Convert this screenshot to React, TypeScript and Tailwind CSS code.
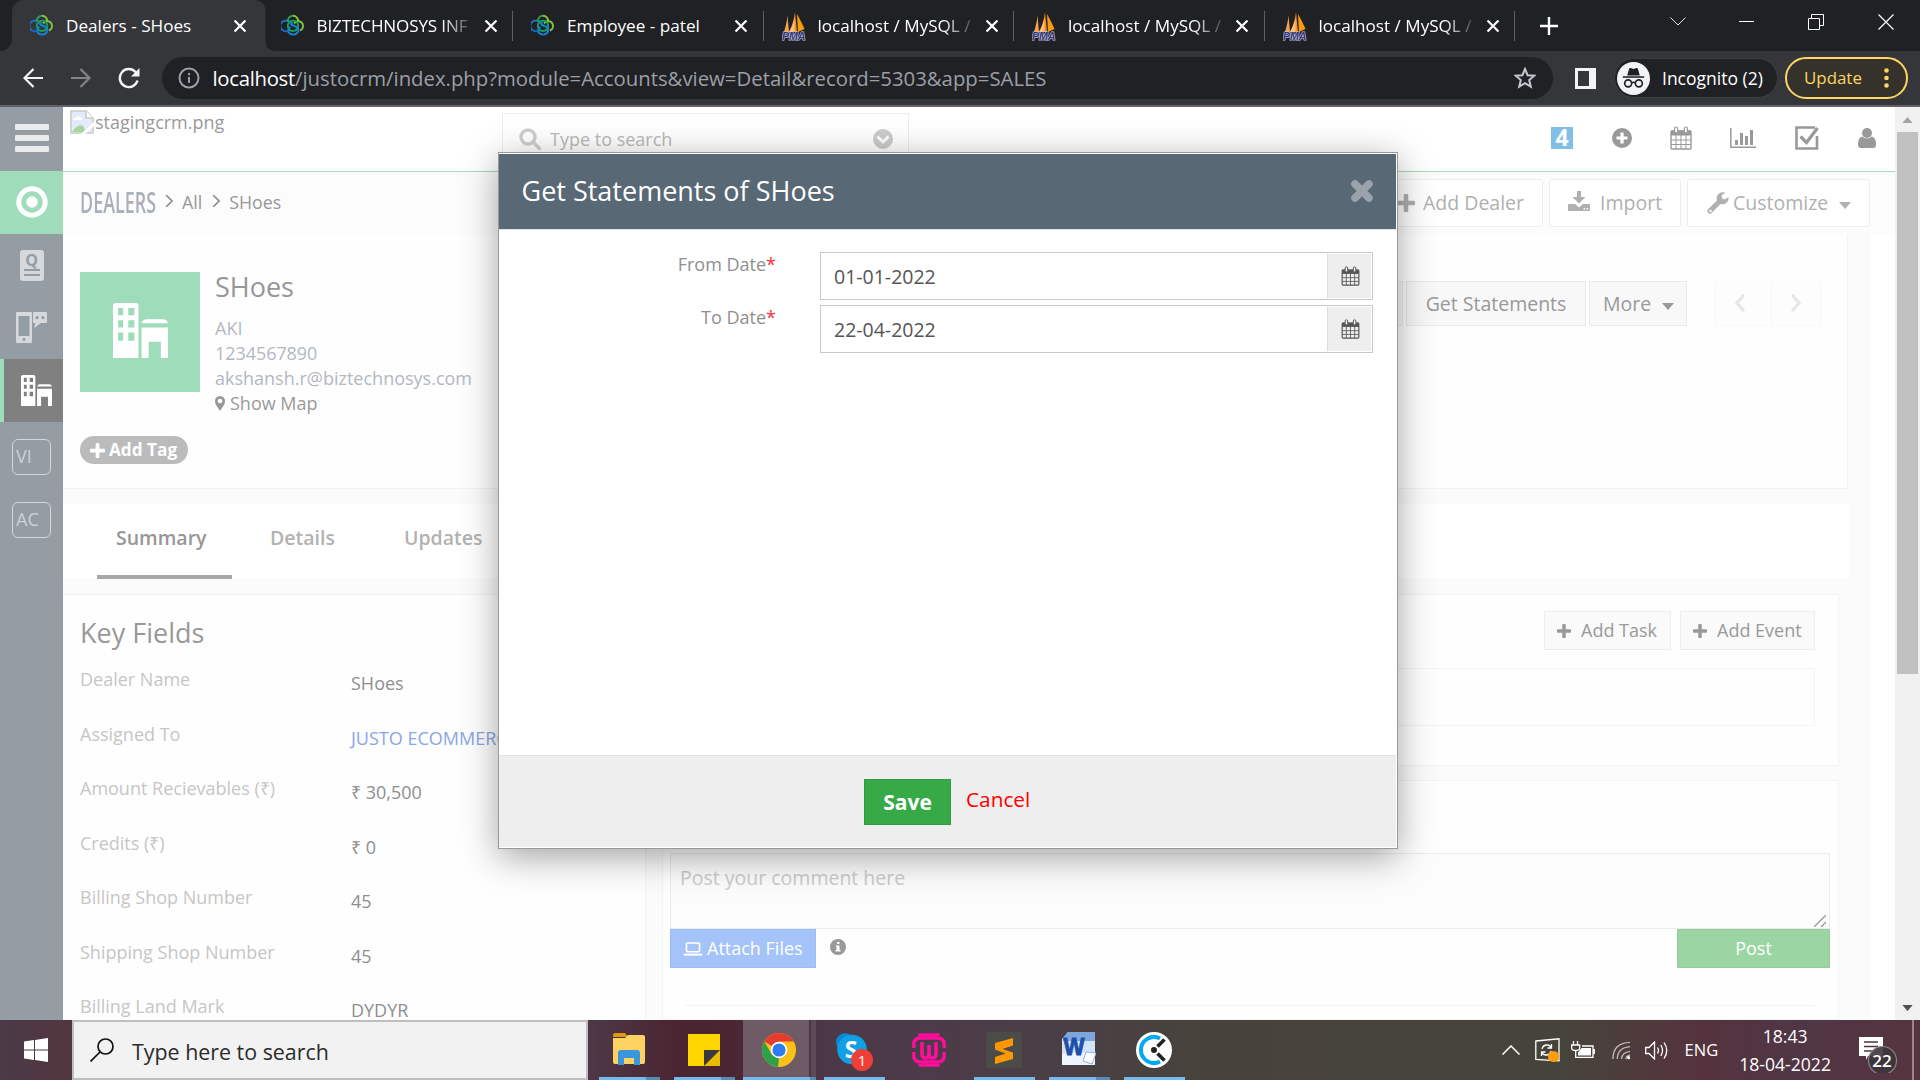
import React from "react";

/* ---------- small shared icons ---------- */

const Calendar = ({ className = "" }: { className?: string }) => (
  <svg viewBox="0 0 22 24" className={className} fill="none" stroke="currentColor">
    <rect x="1" y="5" width="20" height="18" rx="1" strokeWidth="1.4" />
    <path d="M1 4.5h20v5H1z" fill="currentColor" stroke="none" />
    <path d="M6 9v14M11 9v14M16 9v14M1 14h20M1 18.5h20" strokeWidth="1" />
    <rect x="4.6" y="1" width="3" height="6" rx="1.4" fill="#fff" strokeWidth="1.2" />
    <rect x="14.4" y="1" width="3" height="6" rx="1.4" fill="#fff" strokeWidth="1.2" />
  </svg>
);

const Plus = ({ className = "" }: { className?: string }) => (
  <svg viewBox="0 0 16 16" className={className} fill="currentColor">
    <path d="M6 1a1 1 0 0 1 1-1h2a1 1 0 0 1 1 1v5h5a1 1 0 0 1 1 1v2a1 1 0 0 1-1 1h-5v5a1 1 0 0 1-1 1H7a1 1 0 0 1-1-1v-5H1a1 1 0 0 1-1-1V7a1 1 0 0 1 1-1h5z" />
  </svg>
);

const Caret = ({ className = "" }: { className?: string }) => (
  <svg viewBox="0 0 12 7" className={className} fill="currentColor">
    <path d="M0 0h12L6 7z" />
  </svg>
);

const Building = ({ className = "", hole }: { className?: string; hole: string }) => (
  <svg viewBox="0 0 54 54" className={className} fill="#fff">
    <path d="M0 3a3 3 0 0 1 3-3h19a3 3 0 0 1 3 3v51H0z" />
    <path d="M5 5h5v7H5zM15 5h6v7h-6zM5 17h5v7H5zM15 17h6v7h-6zM5 29h5v8H5zM15 29h6v8h-6z" fill={hole} />
    <path d="M28 20q1-4 5-4h16q4 0 5 4zM28 24h26v30h-7V38H35v16h-7z" />
  </svg>
);

const Times = ({ className = "" }: { className?: string }) => (
  <svg viewBox="0 0 24 24" className={className} stroke="currentColor" strokeWidth="7.5" strokeLinecap="round">
    <path d="M5 5l14 14M19 5L5 19" />
  </svg>
);

const CrmLogo = () => (
  <svg viewBox="0 0 24 24" className="size-6 shrink-0" fill="none" strokeWidth="1.9">
    <path d="M2.200 16.500A4.900 4.900 0 0 1 7 7.200q3-.3 4.600 2.300" stroke="#1e74c8" />
    <path d="M6.800 7.300A5.300 5.300 0 0 1 12 1.700" stroke="#2f9e57" />
    <path d="M12 1.700a5.300 5.300 0 0 1 5.200 5.500" stroke="#8cc63f" />
    <path d="M13 9.300q2-2.400 4.800-2a4.800 4.800 0 0 1 1.200 9.200" stroke="#84c341" />
    <circle cx="12" cy="11.800" r="5.200" stroke="#15a35a" />
    <path d="M7 16.300a5.300 5.300 0 0 0 10.400 0q0-3.500-4-4.300-3-.8-4-3" stroke="#1583d8" />
    <path d="M2.200 16.200q2 1.700 5.300 1" stroke="#1769c4" />
    <path d="M7 16.500q.3-2.500 2.500-3.800" stroke="#1583d8" />
  </svg>
);

const PmaLogo = () => (
  <svg viewBox="0 0 24 30" className="h-[30px] w-6 shrink-0">
    <path d="M2 21Q5 11 5.500 4.500L7 21z" fill="#f7a24b" />
    <path d="M7 21Q12 11 13 1l2 20z" fill="#f58f1e" />
    <path d="M15 3q5 9 7.500 15L16 21z" fill="#f89c0e" />
    <path d="M7 21Q11 15 12.500 7v14z" fill="#fbbf7d" />
    <text x="0" y="29" fontSize="10.500" fontWeight="700" fontStyle="italic" fontFamily="Liberation Sans, sans-serif" textLength="23.500" lengthAdjust="spacingAndGlyphs" fill="#34387a" stroke="#c7c9e0" strokeWidth="1.200" paintOrder="stroke">PMA</text>
  </svg>
);

/* ---------- browser chrome ---------- */

const tabs = [
  { title: "Dealers - SHoes", logo: "crm" },
  { title: "BIZTECHNOSYS INF", logo: "crm" },
  { title: "Employee - patel", logo: "crm" },
  { title: "localhost / MySQL /", logo: "pma" },
  { title: "localhost / MySQL /", logo: "pma" },
  { title: "localhost / MySQL /", logo: "pma" },
];

const TabStrip = () => (
  <div className="flex h-[51px] bg-[#202124] text-white">
    <div className="flex w-3 items-end bg-[#35363a]">
      <div className="h-full w-full rounded-br-xl bg-[#202124]" />
    </div>
    {tabs.map((t, i) => (
      <div
        key={i}
        className={
          i === 0
            ? "flex h-full w-[250.500px] shrink-0 items-center rounded-tl-xl bg-[#35363a] pl-[18px]"
            : i === 1
              ? "flex h-full w-[250.500px] shrink-0 items-center"
              : "flex h-full w-[250.500px] shrink-0 items-center pl-[18px]"
        }
      >
        {i === 1 && (
          <svg viewBox="0 0 32 51" className="-ml-[14px] h-[51px] w-8 shrink-0">
            <rect width="32" height="51" fill="#202124" />
            <path d="M0 0h4q12.500 0 12.500 12v28q0 11 10.500 11H0z" fill="#35363a" />
          </svg>
        )}
        {t.logo === "crm" ? <CrmLogo /> : <PmaLogo />}
        <div className={i === 0 || i === 2
          ? "ml-3 w-[156px] shrink-0 text-[17.150px] leading-6 whitespace-nowrap"
          : "ml-3 w-[156px] shrink-0 mask-[linear-gradient(90deg,#000_125px,transparent_160px)] text-[17.100px] leading-6 whitespace-nowrap"}>
          <span className={i === 1 ? "tracking-[-0.150px]" : ""}>{t.title}</span>
        </div>
        <svg viewBox="0 0 12 12" className="ml-3 size-3 shrink-0" stroke="#fff" strokeWidth="2.200">
          <path d="M.5.5l11 11M11.500.5l-11 11" />
        </svg>
        {i > 0 && <div className="ml-auto h-[30px] w-px bg-[#5f6064]" />}
      </div>
    ))}
    <svg viewBox="0 0 18 18" className="mt-[17px] ml-[25px] size-[18px]" stroke="#fff" strokeWidth="2.400">
      <path d="M9 0v18M0 9h18" />
    </svg>
    <div className="ml-auto flex h-[43px] items-center text-[#e3e3e3]">
      <svg viewBox="0 0 16 9" className="mr-[53px] h-[9px] w-4" fill="none" stroke="currentColor"><path d="M.5.5L8 8l7.500-7.500" /></svg>
      <div className="mr-[54px] h-px w-[15px] bg-white" />
      <svg viewBox="0 0 16 16" className="mr-[54px] size-4" fill="none" stroke="#fff"><path d="M.5 4.500h11v11H.5zM3.500 4.500v-4h12v11h-4" /></svg>
      <svg viewBox="0 0 16 16" className="mr-[26px] size-4" stroke="#fff" strokeWidth="1.200"><path d="M.5.5l15 15M15.500.5l-15 15" /></svg>
    </div>
  </div>
);

const Toolbar = () => (
  <div className="flex h-14 items-center border-b-2 border-[#5f6368] bg-[#35363a] pr-3">
    <svg viewBox="0 0 20 20" className="ml-[22.500px] size-5" fill="none" stroke="#f1f3f4" strokeWidth="2.200"><path d="M20 10H2M10.500 1L1.500 10l9 9" /></svg>
    <svg viewBox="0 0 20 20" className="ml-7 size-5" fill="none" stroke="#828387" strokeWidth="2.200"><path d="M0 10h18M9.500 1l9 9-9 9" /></svg>
    <svg viewBox="0 0 22 22" className="ml-[27.500px] size-[22px]" fill="none" stroke="#f1f3f4" strokeWidth="2.400">
      <path d="M19.500 13.500A9 9 0 1 1 17.500 5L20 7.500" />
      <path d="M21.500 1v8.500H13z" fill="#f1f3f4" stroke="none" />
    </svg>
    <div className="ml-[22px] flex h-[42px] w-[1391px] items-center rounded-full bg-[#202124] pl-[16px]">
      <svg viewBox="0 0 22 22" className="size-[22px]" fill="none" stroke="#9aa0a6" strokeWidth="2">
        <circle cx="11" cy="11" r="9.500" /><path d="M11 10v6M11 6v2.200" />
      </svg>
      <div className="ml-[12.500px] text-[20.330px] leading-7 whitespace-nowrap text-[#9aa0a6]">
        <span className="tracking-[-0.300px] text-white">localhost</span>/justocrm/index.php?module=Accounts&amp;view=Detail&amp;record=5303&amp;app=SALES
      </div>
      <svg viewBox="0 0 22 22" className="mr-[17px] ml-auto size-[22px]" fill="none" stroke="#c4c7cc" strokeWidth="2"><path d="M11 2l2.600 6.200 6.700.5-5.100 4.400 1.600 6.600L11 16.200l-5.800 3.500 1.600-6.600L1.700 8.700l6.700-.5z" /></svg>
    </div>
    <div className="ml-[22px] flex size-[21px] bg-[#f1f3f4] p-[3px]"><div className="h-full w-[11px] bg-[#35363a]" /></div>
    <div className="ml-[18px] flex h-10 w-[164px] items-center rounded-full border border-[#3c3d41] bg-[#202124] pl-[2px]">
      <svg viewBox="0 0 34 34" className="size-[33px]">
        <circle cx="17" cy="17" r="17" fill="#f1f3f4" />
        <path d="M10.500 14l2-7q.4-1 1.500-.7l3 .8 3-.8q1.100-.3 1.500.7l2 7z" fill="#202124" />
        <path d="M6 15.500h22" stroke="#202124" strokeWidth="1.600" />
        <g fill="none" stroke="#202124" strokeWidth="1.700"><circle cx="11.500" cy="22" r="3.600" /><circle cx="22.500" cy="22" r="3.600" /><path d="M15 21.500q2-1.200 4 0" /></g>
      </svg>
      <span className="ml-3 text-[17.500px] leading-6 whitespace-nowrap text-white">Incognito (2)</span>
    </div>
    <div className="ml-[7px] flex h-[42px] w-[123px] items-center rounded-full border-2 border-[#fdd663] bg-[#35322b] pl-[17px] text-[#fdd663]">
      <span className="text-[16.900px] leading-6">Update</span>
      <svg viewBox="0 0 5 20" className="ml-[22px] h-5 w-[5px]" fill="currentColor"><circle cx="2.500" cy="2.500" r="2.300" /><circle cx="2.500" cy="10" r="2.300" /><circle cx="2.500" cy="17.500" r="2.300" /></svg>
    </div>
  </div>
);

/* ---------- CRM page ---------- */

const Sidebar = () => (
  <div className="flex w-[63px] shrink-0 flex-col bg-[#949ca4]">
    <div className="flex h-16 flex-col items-center justify-center gap-[5px] pb-[2px]">
      <div className="h-1.5 w-[34px] rounded-[1px] bg-[#e9ebed]" />
      <div className="h-1.5 w-[34px] rounded-[1px] bg-[#e9ebed]" />
      <div className="h-1.5 w-[34px] rounded-[1px] bg-[#e9ebed]" />
    </div>
    <div className="flex h-[63px] items-center justify-center bg-[#9edcba] pb-[2px]">
      <svg viewBox="0 0 32 32" className="size-8"><circle cx="16" cy="16" r="13.200" fill="none" stroke="#fff" strokeWidth="5" /><circle cx="16" cy="16" r="5.700" fill="#fff" /></svg>
    </div>
    <div className="flex h-[63px] items-center justify-center pb-px">
      <div className="flex h-[31px] w-6 flex-col items-center rounded-[3px] bg-[#d6d9dc] text-[#949ca4]">
        <span className="h-[18px] text-[16px] leading-5 font-bold">Q</span>
        <div className="mt-px h-[2px] w-4 bg-[#949ca4]" />
        <div className="mt-[3px] h-[2px] w-4 bg-[#949ca4]" />
      </div>
    </div>
    <div className="flex h-[62px] items-center justify-center pb-px">
      <svg viewBox="0 0 31 31" className="size-[31px]" fill="#d6d9dc">
        <path fillRule="evenodd" d="M1 0h14q1 0 1 1v29q0 1-1 1H1q-1 0-1-1V1q0-1 1-1zm1.500 4v20h11V4zM8 26a1.500 1.500 0 1 0 .01 0z" />
        <path fillRule="evenodd" d="M18 0h12q1 0 1 1v9q0 1-1 1h-5l-7 5 1.500-5H17V1q0-1 1-1zm3 4a1.600 1.600 0 1 0 .01 0zm6 0a1.600 1.600 0 1 0 .01 0z" />
      </svg>
    </div>
    <div className="flex h-[63px] items-center border-l-4 border-[#9edcba] bg-[#808080] pl-[17px]">
      <Building className="size-[31px]" hole="#808080" />
    </div>
    {["VI", "AC"].map((m) => (
      <div key={m} className="flex h-[63px] items-center justify-center pt-[6px]">
        <div className="flex h-9 w-[39px] items-center rounded-md border border-[#d2d6d9] pl-[3px] text-[18px] text-[#cdd1d5]">{m}</div>
      </div>
    ))}
  </div>
);

const Header = () => (
  <div className="flex h-[65px] border-b border-[#9edcba] bg-white text-[#999]">
    <div className="flex w-[439px] pt-[3px] pl-[7px]">
      <svg viewBox="0 0 24 24" className="size-6">
        <path d="M1 1h15l7 7v15H1z" fill="#e3ebfa" stroke="#ccc" strokeWidth="1.600" />
        <path d="M16 1v7h7" fill="#fff" stroke="#ccc" strokeWidth="1.600" />
        <path d="M3 9q1-2 3-1 1-3 4-1 3 0 2 3H3z" fill="#fff" />
        <path d="M2 22q6-9 11-6l3 6z" fill="#a8d79b" />
        <path d="M11 24L24 12v4l-9 8z" fill="#fff" />
      </svg>
      <span className="ml-px text-[18px] leading-[25px]">stagingcrm.png</span>
    </div>
    <div className="mt-[6px] flex h-[58px] w-[407px] border border-b-0 border-[#ececec] pt-[13px] pl-4 text-[#b9b9b9]">
      <svg viewBox="0 0 22 22" className="mt-[1px] size-[22px]" fill="none" stroke="#cfcfcf" strokeWidth="3.400"><circle cx="9" cy="9" r="7" /><path d="M14 14l6.500 6.500" strokeLinecap="round" /></svg>
      <span className="ml-[9px] text-[18px] leading-6">Type to search</span>
      <svg viewBox="0 0 20 20" className="mt-[2px] mr-[15px] ml-auto size-5"><circle cx="10" cy="10" r="10" fill="#cbcbcb" /><path d="M4.500 7.500L10 13l5.500-5.500" fill="none" stroke="#fff" strokeWidth="3" /></svg>
    </div>
    <div className="mr-[19px] ml-auto flex h-[61px] items-center">
      <div className="mr-[39px] flex size-[22px] items-center justify-center bg-[#80c0e6] text-[23px] leading-none font-bold text-white">4</div>
      <svg viewBox="0 0 20 20" className="mr-[38px] size-5"><circle cx="10" cy="10" r="10" fill="#999" /><path d="M10 4.500v11M4.500 10h11" stroke="#fff" strokeWidth="3.200" /></svg>
      <Calendar className="mr-[38px] h-6 w-[22px]" />
      <svg viewBox="0 0 26 20" className="mr-[39px] h-5 w-[26px]" fill="none" stroke="#999"><path d="M.8 0v19.200H26" strokeWidth="1.500" /><path d="M6.500 12v5M11.500 5v12M16.500 8v9M21.500 2v15" strokeWidth="3" /></svg>
      <svg viewBox="0 0 24 24" className="mr-[39px] size-6" fill="none" stroke="#999"><path d="M20 1.500H1.500v21H22V10" strokeWidth="2.600" /><path d="M5.500 10.500l6 6L22.500 2" strokeWidth="3.200" /></svg>
      <svg viewBox="0 0 18 20" className="h-5 w-[18px]" fill="#999"><circle cx="9" cy="5" r="5" /><path d="M4 8.500q5 4 10 0 4 1.500 4 8 0 3.500-3 3.500H3q-3 0-3-3.500 0-6.500 4-8z" /></svg>
    </div>
  </div>
);

const Chevron = () => (
  <svg viewBox="0 0 8 12" className="h-3 w-2" fill="none" stroke="#909090" strokeWidth="1.700"><path d="M1 0l6 6-6 6" /></svg>
);

const Breadcrumb = () => (
  <div className="flex h-[62px] items-start bg-[#fcfcfc] pt-[7px] pl-[17px] text-[#b0b0b0]">
    <div className="flex h-[46px] items-center text-[17.800px] text-[#989898]">
      <div className="w-[76px]"><span className="inline-block origin-left scale-x-[0.640] text-[28px] leading-[46px] font-semibold text-[#a9b0b9]">DEALERS</span></div>
      <div className="ml-[9px] pb-[3px]"><Chevron /></div>
      <span className="ml-[9px]">All</span>
      <div className="ml-[10px] pb-[3px]"><Chevron /></div>
      <span className="ml-[9px]">SHoes</span>
    </div>
    <div className="mr-[25px] ml-auto flex gap-[6px] text-[19.500px]">
      <div className="flex h-12 w-[164px] items-center rounded-[3px] border border-[#ededed] bg-white pl-[17px]"><Plus className="size-[18px]" /><span className="ml-2">Add Dealer</span></div>
      <div className="flex h-12 w-[132px] items-center rounded-[3px] border border-[#ededed] bg-white pl-[18px]">
        <svg viewBox="0 0 22 20" className="mb-1 h-5 w-[22px]" fill="currentColor"><path d="M9 0h4v6h4.500L11 12.500 4.500 6H9z" /><path fillRule="evenodd" d="M1 13h6l4 3.500L15 13h6q1 0 1 1v5q0 1-1 1H1q-1 0-1-1v-5q0-1 1-1zm14.500 4v1.500H17V17zm3 0v1.500H20V17z" /></svg>
        <span className="ml-[10px]">Import</span>
      </div>
      <div className="flex h-12 w-[183px] items-center rounded-[3px] border border-[#ededed] bg-white pl-[19px]">
        <svg viewBox="0 0 22 22" className="size-[22px]" fill="currentColor"><path fillRule="evenodd" d="M21.300 5.200L17.500 7.500 14.800 6V3L18.500.7Q14 -1 11 2.500 9 5.200 10 8.500L.8 17.500q-1.200 1.500 0 2.800l1 1q1.200 1 2.500 0L13.500 12q3.500 1 6-1.200Q22.200 8.300 21.300 5.200zM3.500 17.700a1.200 1.200 0 1 1-.01 0z" /></svg>
        <span className="ml-[4px]">Customize</span>
        <Caret className="mt-1 ml-[11px] h-[7px] w-3" />
      </div>
    </div>
  </div>
);

const DealerPanel = () => (
  <div className="flex h-[255px] w-[1785px] border-r border-b border-[#f3f3f3] bg-[#fefefe] pl-[17px]">
    <div className="pt-[38px]">
      <div className="flex">
        <div className="flex size-[120px] items-center justify-center bg-[#9edcba] pb-1"><Building className="ml-px size-[55px]" hole="#9edcba" /></div>
        <div className="ml-[15px] text-[18px] leading-[25px] text-[#b3b8be]">
          <div className="-mt-[1px] h-[45px] text-[27px] leading-[32px] text-[#979797]">SHoes</div>
          <div>AKI</div>
          <div className="text-[17.900px]">1234567890</div>
          <div>akshansh.r@biztechnosys.com</div>
          <div className="flex items-center text-[#999]">
            <svg viewBox="0 0 10 15" className="mr-[5px] h-[15px] w-[10px]" fill="#999"><path fillRule="evenodd" d="M5 0q5 .3 5 5 0 2-1 4l-4 6-4-6Q0 7 0 5 0 .3 5 0zm0 2.700a2.300 2.300 0 1 0 .01 0z" /></svg>
            Show Map
          </div>
        </div>
      </div>
      <div className="mt-[20px] flex h-7 w-[108px] items-center rounded-full bg-[#bbb] pl-[10px] text-[17.200px] font-bold text-white"><Plus className="mr-1 size-[15px]" /><span className="pb-px">Add Tag</span></div>
    </div>
    <div className="mt-[47px] mr-[25px] ml-auto flex text-[19.500px] text-[#999]">
      <div className="mr-[3px] h-[45px] w-[80px] border border-[#eaeaea] bg-[#f8f8f8]" />
      <div className="mr-[3px] flex h-[45px] w-[180px] items-center justify-center border border-[#eaeaea] bg-[#f8f8f8]">Get Statements</div>
      <div className="mr-[27px] flex h-[45px] w-[98px] items-center border border-[#eaeaea] bg-[#f8f8f8] pl-[13px]">More<Caret className="mt-[5px] ml-[11px] h-[7px] w-3" /></div>
      {["M9 1L2 9l7 8", "M2 1l7 8-7 8"].map((d, i) => (
        <div key={i} className={i ? "flex h-[45px] w-[52px] items-center justify-center border border-[#f9f9f9] bg-[#fdfdfd] pr-px pb-[2px]" : "mr-[3px] flex h-[45px] w-[53px] items-center justify-center border border-[#f9f9f9] bg-[#fdfdfd] pb-[2px]"}>
          <svg viewBox="0 0 12 18" className="h-[18px] w-3" fill="none" stroke="#e6e6e6" strokeWidth="3.200"><path d={d} /></svg>
        </div>
      ))}
    </div>
  </div>
);

const TabsPanel = () => (
  <div className="flex h-[75px] w-[1786px] bg-white pl-[34px] text-[19.500px] font-semibold text-[#b2b2b2]">
    <div className="h-full w-[135px] border-b-4 border-[#a8a8a8] pt-[21px] pl-[19px] leading-[26px] text-[#969696]">Summary</div>
    <div className="ml-[38px] w-[134px] pt-[21px] leading-[26px]">Details</div>
    <div className="pt-[21px] leading-[26px]">Updates</div>
  </div>
);

const fields = [
  ["Dealer Name", "SHoes"],
  ["Assigned To", "JUSTO ECOMMERCE"],
  ["Amount Recievables (₹)", "₹ 30,500"],
  ["Credits (₹)", "₹ 0"],
  ["Billing Shop Number", "45"],
  ["Shipping Shop Number", "45"],
  ["Billing Land Mark", "DYDYR"],
];

const KeyFields = () => (
  <div className="w-[583px] shrink-0 border-t border-r border-[#f1f1f1] bg-[#fefefe] pl-[17px]">
    <div className="mt-[20px] h-[51px] text-[27px] leading-9 text-[#999]">Key Fields</div>
    {fields.map(([label, value], i) => (
      <div key={label} className="flex h-[54.500px] text-[18px] leading-[26px]">
        <span className="w-[271px] text-[#c6c6c6]">{label}</span>
        <span className={i === 1 ? "pt-1 whitespace-nowrap text-[#8aa6e6]" : "pt-1 text-[#8e8e8e]"}>{value}</span>
      </div>
    ))}
  </div>
);

const Activities = () => (
  <div className="h-[172px] border border-[#f3f3f3] bg-[#fefefe] pt-4 pr-[23px] text-[18px] text-[#999]">
    <div className="flex justify-end gap-[9px]">
      <div className="flex h-[39px] w-[127px] items-center border border-[#eee] bg-[#fafafa] pl-3"><Plus className="mr-[10px] size-[14px]" />Add Task</div>
      <div className="flex h-[39px] w-[135px] items-center border border-[#eee] bg-[#fafafa] pl-3"><Plus className="mr-[10px] size-[14px]" />Add Event</div>
    </div>
    <div className="mt-[18px] ml-[22px] h-[58px] border border-[#f3f3f3]" />
  </div>
);

const Comments = () => (
  <div className="mt-[14px] flex-1 border border-[#f3f3f3] bg-[#fefefe] pt-[72px] pr-[8px] pl-[7px]">
    <div className="flex h-[76px] items-start border border-[#ebebeb] bg-[#fcfcfc] pt-[10px] pl-[9px] text-[19.500px] leading-[28px] text-[#cbcbcb]">
      Post your comment here
      <svg viewBox="0 0 12 12" className="mt-[51px] mr-[3px] ml-auto size-3" stroke="#a0a0a0" strokeWidth="1.500"><path d="M0 12L12 0M7 12l5-5" /></svg>
    </div>
    <div className="flex h-[39px]">
      <div className="flex w-[146px] items-center border border-[#9bbdf3] bg-[#a4c3f9] pl-3 text-[18px] text-white">
        <svg viewBox="0 0 20 15" className="mr-[4px] h-[14px] w-5" fill="none" stroke="#fff"><rect x="3" y="1" width="14" height="9.500" rx="1" strokeWidth="1.700" /><path d="M0 13.500h20" strokeWidth="2.200" /></svg>
        Attach Files
      </div>
      <svg viewBox="0 0 16 16" className="mt-[9.500px] ml-[14px] size-4"><circle cx="8" cy="8" r="8" fill="#999" /><path d="M7 3h2.500v2H7zM6 6.500h3.500V11h1v1.500h-5V11h1V8H6z" fill="#fff" /></svg>
      <div className="ml-auto flex w-[153px] items-center justify-center border border-[#94cc9e] bg-[#9bd5a4] text-[18px] text-white">Post</div>
    </div>
    <div className="mx-[15px] mt-[37px] border-t border-[#f2f2f2]" />
  </div>
);

const DateField = ({ value }: { value: string }) => (
  <div className="flex h-12 w-[553px] border border-[#c8c8c8] bg-white p-px text-[19.500px] text-[#555]">
    <div className="flex flex-1 items-center pt-px pl-3">{value}</div>
    <div className="flex w-11 items-center justify-center border-l border-[#ddd] bg-[#eee] pl-[2px]"><Calendar className="h-5 w-[19px]" /></div>
  </div>
);

const Modal = () => (
  <div className="absolute top-[45px] left-[498px] flex h-[697px] w-[900px] flex-col border border-[#999] bg-white pt-px pr-px pb-px shadow-[0_8px_34px_rgba(0,0,0,0.360)]">
    <div className="flex h-[75px] items-center bg-[#596875] pr-[22px] pl-[22.500px] text-[27px] text-white">
      Get Statements of SHoes
      <Times className="mb-[2px] ml-auto size-6 text-[#9aa3ab]" />
    </div>
    <div className="flex-1 border-t border-[#e5e5e5] pt-[22px] text-[18px] leading-6 text-[#8f8f8f]">
      <div className="flex h-[53px] justify-end pr-[23px]"><div className="mr-[44px]">From Date<span className="text-red-500">*</span></div><DateField value="01-01-2022" /></div>
      <div className="flex h-[53px] justify-end pr-[23px]"><div className="mr-[44px]">To Date<span className="text-red-500">*</span></div><DateField value="22-04-2022" /></div>
    </div>
    <div className="flex h-[92px] border-t border-[#e2e2e2] bg-[#eee] pt-[23px] pl-[365px]">
      <div className="flex h-[46px] w-[87px] items-center justify-center border border-[#319c41] bg-[#35aa47] pt-[2px] text-[21px] font-bold text-white">Save</div>
      <span className="ml-[15px] text-[20.800px] leading-[40px] text-[#f00]">Cancel</span>
    </div>
  </div>
);

const CrmPage = () => (
  <div className="relative flex h-[913px] overflow-hidden bg-white">
    <Sidebar />
    <div className="flex min-w-0 flex-1 flex-col">
      <Header />
      <Breadcrumb />
      <div className="flex min-h-0 w-[1808px] flex-1 flex-col overflow-hidden bg-[#fbfbfb]">
        <DealerPanel />
        <div className="h-[15px] shrink-0" />
        <TabsPanel />
        <div className="mt-[15px] flex min-h-0 flex-1">
          <KeyFields />
          <div className="ml-4 flex w-[1177px] flex-col"><Activities /><Comments /></div>
        </div>
      </div>
    </div>
    <div className="flex w-[25px] flex-col items-center bg-[#f1f1f1]">
      <Caret className="mt-[10px] h-[6px] w-[11px] rotate-180 text-[#a3a3a3]" />
      <div className="mt-[9px] h-[542px] w-[21px] bg-[#c1c1c1]" />
      <Caret className="mt-auto mb-[9px] h-[6px] w-[11px] text-[#505050]" />
    </div>
    <Modal />
  </div>
);

/* ---------- taskbar ---------- */

const apps = [
  <svg viewBox="0 0 32 32" className="mt-px h-[32px] w-8" preserveAspectRatio="none"><path d="M0 2q0-2 2-2h10l3 4H0z" fill="#dc9a0a" /><path d="M0 5h12l3-3h15q2 0 2 2v25q0 2-2 2H2q-2 0-2-2z" fill="#fdd162" /><path d="M5 32V20q0-3 3-3h16q3 0 3 3v12h-6v-7H11v7z" fill="#3a96dd" /></svg>,
  <svg viewBox="0 0 32 32" className="mt-[2px] size-8"><path d="M0 0h32v16H16v16H0z" fill="#ffd500" /><path d="M16 16h16L16 32z" fill="#3a3a3c" /><path d="M32 16v16H16z" fill="#e8bd00" /></svg>,
  <svg viewBox="0 0 34 34" className="mt-[2px] size-[34px]"><circle cx="17" cy="17" r="17" fill="#fbc116" /><path d="M17 17L2.300 8.500A17 17 0 0 1 31.700 8.500H17z" fill="#e33b2e" /><path d="M2.300 8.500L9.600 21.300 17 25.500 16 34A17 17 0 0 1 2.300 8.500z" fill="#2da04a" /><path d="M24.500 21L17 34h-1l5-10z" fill="#fbc116" /><circle cx="17" cy="17" r="8.300" fill="#fff" /><circle cx="17" cy="17" r="6.600" fill="#2f7cf0" /></svg>,
  <svg viewBox="0 0 38 38" className="mt-[6px] ml-px size-[38px]"><circle cx="10" cy="9" r="9" fill="#0b86cf" /><circle cx="23" cy="24" r="8.500" fill="#0078c8" /><circle cx="17" cy="16.500" r="14.800" fill="#0fa0e6" /><text x="16" y="25" textAnchor="middle" fontSize="23" fontWeight="700" fontFamily="Open Sans" fill="#fff">S</text><circle cx="27" cy="27" r="11" fill="#ef3f36" /><text x="27" y="32.500" textAnchor="middle" fontSize="15" fontFamily="Open Sans" fill="#fff">1</text></svg>,
  <svg viewBox="0 0 34 34" className="mt-[2px] size-[34px]" fill="none" stroke="#ff0d9b"><path d="M5 1.800h24M5 32.200h24" strokeWidth="3" strokeLinecap="round" transform="translate(3.400 0) scale(.8 1)" /><path d="M1.800 15V11Q2 5 9 5h16q7 0 7.200 6v4M1.800 19v4q.2 6 7.200 6h16q7 0 7.200-6v-4" strokeWidth="3.400" /><path d="M10 9v12q0 4 3.500 4t3.500-4V12M17 21q0 4 3.500 4t3.500-4V9" strokeWidth="3.600" /></svg>,
  <svg viewBox="0 0 36 36" className="mt-[2px] size-9"><rect width="36" height="36" rx="3" fill="#4b4b47" /><path d="M27 6v7.500L16.500 17l10.500 3.500V27L9 32v-7l10.500-3.500L9 17.500v-6.500z" fill="#ff9800" /></svg>,
  <svg viewBox="0 0 34 34" className="size-[34px]"><path d="M6 0h27v33H0V7z" fill="#d5e3f8" /><path d="M6 0h27v9H1V6z" fill="#7fa6dc" /><path d="M0 33V22l33-2v13z" fill="#eef4fd" /><path d="M24 20l10 1-4 11-9-3z" fill="#fff" stroke="#8fb0de" /><text x="12" y="23" textAnchor="middle" fontSize="24" fontWeight="700" fontFamily="Liberation Sans" textLength="21" lengthAdjust="spacingAndGlyphs" fill="#1c4fa8" stroke="#1c4fa8">W</text></svg>,
  <svg viewBox="0 0 36 36" className="mt-[2px] size-9" fill="none"><circle cx="18" cy="18" r="18" fill="#fff" /><path d="M24 6.500A13 13 0 1 0 24 29.500" stroke="#03a9f4" strokeWidth="4" /><circle cx="18" cy="18" r="3" fill="#222" /><path d="M21.500 14.500l7-7M21.500 21.500l7 7" stroke="#222" strokeWidth="3.600" /></svg>,
];

const lineClasses = [
  "h-[3px] w-[61px] bg-[linear-gradient(90deg,#76b9ed_47px,#5b8bb5_47px)]",
  "h-[3px] w-[61px] bg-[linear-gradient(90deg,#76b9ed_47px,#5b8bb5_47px)]",
  "h-[3px] w-[73px] bg-[linear-gradient(90deg,#76b9ed_67px,#5b8bb5_67px)]",
  "h-[3px] w-[61px] bg-[#76b9ed]",
  "h-[3px] w-[61px]",
  "h-[3px] w-[61px] bg-[#76b9ed]",
  "h-[3px] w-[61px] bg-[linear-gradient(90deg,#76b9ed_47px,#5b8bb5_47px)]",
  "h-[3px] w-[61px] bg-[#76b9ed]",
];

const Taskbar = () => (
  <div className="flex h-[60px] bg-[linear-gradient(90deg,#4a3a48_0px,#52363f_60px,#4d3947_588px,#4a2430_680px,#4a2632_730px,#4d3848_830px,#4b3d48_1000px,#47433c_1200px,#46443a_1560px,#55333e_1700px,#503644_1800px,#55343f_1920px)] text-white">
    <div className="flex w-[72px] items-center justify-center">
      <svg viewBox="0 0 24 24" className="size-6" fill="#fff"><path d="M0 3.500l10-1.400v9.400H0zM11 2l13-2v11.500H11zM0 12.500h10v9.400L0 20.500zM11 12.500h13V24l-13-2z" /></svg>
    </div>
    <div className="flex w-[516px] items-center border-2 border-[#bfbfbf] bg-[#f2f2f2] pl-4">
      <svg viewBox="0 0 24 24" className="size-6" fill="none" stroke="#111" strokeWidth="1.700"><circle cx="15.500" cy="8.500" r="7.500" /><path d="M10 14L.5 23.500" /></svg>
      <span className="ml-[18px] pt-[3px] text-[21.400px] leading-7 text-[#2b2b2b]">Type here to search</span>
    </div>
    <div className="ml-[3.500px] flex">
      {apps.map((icon, i) => (
        <div key={i} className={i === 2 ? "flex w-[75px] flex-col items-center bg-[linear-gradient(90deg,transparent_1px,#6f5b66_1px,#6f5b66_67px,#463742_67px,#463742_69px,#5c4b57_69px,#5c4b57_74px,transparent_74px)]" : "flex w-[75px] flex-col items-center"}>
          <div className={i === 2 ? "flex h-[57px] w-full items-center pl-[20px]" : "flex h-[57px] items-center pr-px"}>{icon}</div>
          <div className={lineClasses[i]} />
        </div>
      ))}
    </div>
    <div className="ml-auto flex items-center">
      <svg viewBox="0 0 18 10" className="mr-[15px] h-[10px] w-[18px]" fill="none" stroke="#fff" strokeWidth="1.500"><path d="M.5 9.500L9 1l8.500 8.500" /></svg>
      <svg viewBox="0 0 25 25" className="mr-[11px] size-[25px]" fill="none" stroke="#fff" strokeWidth="1.300"><path d="M.8 3L24 .8v22L.8 21.500z" /><path d="M7 11q1-4 5-4 3 0 4 2.500M16.500 6v4h-4M16 13q-1 4-5 4-3 0-4-2.500M6.500 18v-4h4" /><circle cx="18.500" cy="18.500" r="5.500" fill="#ff9d0a" stroke="none" /></svg>
      <svg viewBox="0 0 24 18" className="mr-[17px] h-[18px] w-6" fill="none" stroke="#fff" strokeWidth="1.300"><path d="M2.500 0v4M6.500 0v4M.7 4h8v3q0 2.500-4 2.500T.7 7zM4.700 10v6.300H22V5H11M23.300 8v5" /><path d="M7 11.500L10.500 7H20v7.500H7z" fill="#fff" stroke="none" /></svg>
      <svg viewBox="0 0 20 20" className="mr-[14px] size-[19px]" fill="none" stroke="#bdb9b6" strokeWidth="1.400"><path d="M1 19Q1 2 19 1.500M5.500 19Q6 7 19 6M10 19q.5-7 9-8" /><path d="M14.500 19q.5-3.500 4.500-4" /><circle cx="17.500" cy="17.500" r="1.600" fill="#fff" stroke="none" /></svg>
      <svg viewBox="0 0 23 19" className="mr-[17px] h-[19px] w-[23px]" fill="none" stroke="#fff" strokeWidth="1.300"><path d="M.7 6.500H4L9.500 1v17L4 12.500H.7zM12.500 6.500q2 3 0 6M15.800 4q3.500 5.500 0 11M19 1.500q5.500 8 0 16" /></svg>
      <span className="mr-[21px] pt-px text-[16.500px]">ENG</span>
      <div className="mr-[28px] text-center text-[17.600px] leading-7"><div>18:43</div><div>18-04-2022</div></div>
      <svg viewBox="0 0 40 42" className="mt-[3px] mr-[13px] h-[42px] w-10">
        <path d="M0 6h24v19H9l-2 4v-4H0z" fill="#fff" />
        <path d="M5 11h14M5 15.500h14M5 20h9" stroke="#4b3640" strokeWidth="1.300" />
        <circle cx="23.500" cy="29.500" r="14" fill="#3d363c" fillOpacity=".9" stroke="#8a8288" strokeWidth="1.200" />
        <text x="23" y="35.500" textAnchor="middle" fontSize="17" fontWeight="600" fontFamily="Open Sans" fill="#fff">22</text>
      </svg>
      <div className="mr-[6px] h-[60px] w-[2px] bg-[#98858e]" />
    </div>
  </div>
);

export default function App() {
  return (
    <div className="h-[1080px] w-[1920px] overflow-hidden font-['Open_Sans',sans-serif]">
      <TabStrip />
      <Toolbar />
      <CrmPage />
      <Taskbar />
    </div>
  );
}
